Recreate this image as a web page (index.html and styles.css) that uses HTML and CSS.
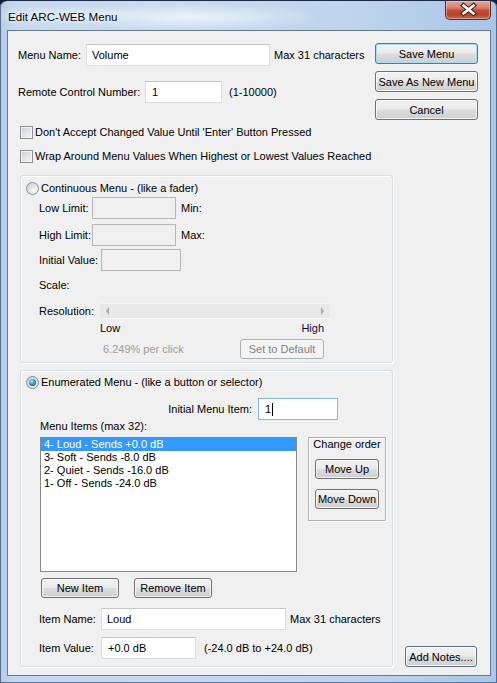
FILE: index.html
```html
<!DOCTYPE html>
<html lang="en">
<head>
<meta charset="utf-8">
<title>Edit ARC-WEB Menu</title>
<link rel="stylesheet" href="styles.css">
</head>
<body>
<div class="window">
  <div class="titlebar">
    <span class="title">Edit ARC-WEB Menu</span>
    <div class="close" aria-label="Close">
      <svg width="46" height="19" viewBox="0 0 46 19">
        <path d="M18.5 5.5 L28.5 13.5 M28.5 5.5 L18.5 13.5" stroke="#4b2019" stroke-width="4.8" stroke-linecap="square"/>
        <path d="M18.5 5.5 L28.5 13.5 M28.5 5.5 L18.5 13.5" stroke="#ffffff" stroke-width="2.6" stroke-linecap="square"/>
      </svg>
    </div>
  </div>

  <div class="client">
    <div class="top">
      <div class="fields">
        <div class="row name-row">
          <span class="lbl lbl-name">Menu Name:</span>
          <div class="tb tb-name">Volume</div>
          <span class="hint hint-name">Max 31 characters</span>
        </div>
        <div class="row rc-row">
          <span class="lbl lbl-rc">Remote Control Number:</span>
          <div class="tb tb-rc">1</div>
          <span class="hint hint-rc">(1-10000)</span>
        </div>
        <div class="check check-first"><span class="cb"></span><span>Don't Accept Changed Value Until 'Enter' Button Pressed</span></div>
        <div class="check check-second"><span class="cb"></span><span>Wrap Around Menu Values When Highest or Lowest Values Reached</span></div>
      </div>
      <div class="actions">
        <div class="btn btn-default">Save Menu</div>
        <div class="btn">Save As New Menu</div>
        <div class="btn">Cancel</div>
      </div>
    </div>

    <div class="bottom">
      <div class="groups">
        <div class="group group-cont">
          <div class="opt"><span class="rb"></span><span>Continuous Menu - (like a fader)</span></div>
          <div class="cbody">
            <div class="row lim-row lim-low">
              <span class="lbl lbl-lim">Low Limit:</span>
              <div class="tb tb-off tb-lim"></div>
              <span class="after">Min:</span>
            </div>
            <div class="row lim-row lim-high">
              <span class="lbl lbl-lim">High Limit:</span>
              <div class="tb tb-off tb-lim"></div>
              <span class="after">Max:</span>
            </div>
            <div class="row lim-row lim-init">
              <span class="lbl lbl-init">Initial Value:</span>
              <div class="tb tb-off tb-init"></div>
            </div>
            <div class="scale-row">Scale:</div>
            <div class="res-row">
              <span class="lbl lbl-res">Resolution:</span>
              <div class="scroll"><span class="arr arr-l"></span><span class="arr arr-r"></span></div>
            </div>
            <div class="ends"><span>Low</span><span>High</span></div>
            <div class="click-row">
              <span class="muted">6.249% per click</span>
              <div class="btn btn-off btn-default-set">Set to Default</div>
            </div>
          </div>
        </div>

        <div class="group group-enum">
          <div class="opt"><span class="rb rb-on"></span><span>Enumerated Menu - (like a button or selector)</span></div>
          <div class="ebody">
            <div class="init-row">
              <span class="lbl-initial">Initial Menu Item:</span>
              <div class="tb tb-focus tb-item">1<span class="caret"></span></div>
            </div>
            <div class="items-lbl">Menu Items (max 32):</div>
            <div class="list-row">
              <div class="list">
                <div class="li li-sel">4- Loud - Sends +0.0 dB</div>
                <div class="li">3- Soft - Sends -8.0 dB</div>
                <div class="li">2- Quiet - Sends -16.0 dB</div>
                <div class="li">1- Off - Sends -24.0 dB</div>
              </div>
              <div class="order">
                <div class="order-title">Change order</div>
                <div class="btn btn-order btn-up">Move Up</div>
                <div class="btn btn-order btn-down">Move Down</div>
              </div>
            </div>
            <div class="item-btns">
              <div class="btn btn-item">New Item</div>
              <div class="btn btn-item btn-remove">Remove Item</div>
            </div>
            <div class="row iname-row">
              <span class="lbl lbl-item">Item Name:</span>
              <div class="tb tb-iname">Loud</div>
              <span class="hint hint-iname">Max 31 characters</span>
            </div>
            <div class="row ival-row">
              <span class="lbl lbl-item">Item Value:</span>
              <div class="tb tb-ival">+0.0 dB</div>
              <span class="hint hint-ival">(-24.0 dB to +24.0 dB)</span>
            </div>
          </div>
        </div>
      </div>
      <div class="btn btn-notes">Add Notes....</div>
    </div>
  </div>
</div>
</body>
</html>
```

FILE: styles.css
```css
* { box-sizing: border-box; }

html, body { margin: 0; padding: 0; }

body {
  width: 497px;
  height: 683px;
  overflow: hidden;
  background: #0d1a33;
  font-family: "Liberation Sans", Arial, sans-serif;
  font-size: 11px;
  color: #000;
}

/* ---------- window frame ---------- */
.window {
  width: 497px;
  height: 683px;
  display: flex;
  flex-direction: column;
  padding-bottom: 7px;
  border-top: 1px solid #1b2b47;
  border-radius: 7px 7px 0 0;
  background:
    radial-gradient(ellipse 130px 14px at 190px 16px, rgba(240, 246, 252, 0.85), rgba(240, 246, 252, 0) 100%),
    radial-gradient(ellipse 90px 10px at 60px 14px, rgba(235, 243, 251, 0.6), rgba(235, 243, 251, 0) 100%),
    linear-gradient(to right, #b7cde6 0, #c6d9ee 3%, #c9dbef 30%, #bfd5ed 70%, #a9c6e6 100%);
  box-shadow: inset 1px 0 0 #5a6f8c, inset -1px 0 0 #4f6d99, inset 0 -1px 0 #5c78a0;
}

.titlebar {
  height: 29px;
  display: flex;
  align-items: flex-start;
  padding: 0 6px 0 8px;
}

.title {
  margin-top: 8px;
  font-size: 11.6px;
  line-height: 15px;
  color: #000;
  text-shadow: 0 0 6px rgba(255, 255, 255, 0.95), 0 0 2px rgba(255, 255, 255, 0.9);
}

.close {
  margin-left: auto;
  width: 46px;
  height: 19px;
  border: 1px solid #5e2a22;
  border-top: none;
  border-radius: 0 0 5px 5px;
  background: linear-gradient(#e6a595 0%, #d67d6a 40%, #c4503b 50%, #b8402a 75%, #cc6c52 100%);
  box-shadow: inset 0 0 0 1px rgba(255, 220, 210, 0.45);
}

.close svg { display: block; margin: -1px 0 0 -1px; }

.client {
  flex: 1;
  margin: 0 6px 0 7px;
  border: 1px solid #66788f;
  background: #f0f0f0;
}

/* ---------- top block ---------- */
.top {
  display: flex;
  padding: 12px 12px 0 10px;
}

.fields {
  flex: 1;
  display: flex;
  flex-direction: column;
}

.row {
  display: flex;
  align-items: center;
  height: 22px;
}

.name-row { margin-top: 1px; }
.rc-row { margin-top: 15px; }

.lbl { flex: none; white-space: nowrap; }
.lbl-name { width: 68px; }
.lbl-rc { width: 127px; }

.tb {
  flex: none;
  height: 22px;
  display: flex;
  align-items: center;
  padding-left: 5px;
  background: #fff;
  border: 1px solid #dadde2;
  border-top-color: #c3c7cd;
  white-space: nowrap;
}

.tb-name { width: 184px; }
.tb-rc { width: 77px; padding-left: 6px; }

.hint { white-space: nowrap; }
.hint-name { margin-left: 4px; }
.hint-rc { margin-left: 7px; }

.check {
  display: flex;
  align-items: center;
  height: 16px;
  margin-left: 2px;
  white-space: nowrap;
}

.check-first { margin-top: 21px; }
.check-second { margin-top: 8px; }

.cb {
  flex: none;
  width: 13px;
  height: 13px;
  margin-right: 2px;
  border: 1px solid #8e8f8f;
  background: linear-gradient(135deg, #c9ccd2 0%, #e4e6e9 55%, #f6f6f6 100%);
  box-shadow: inset 0 0 0 1px #f4f4f4;
}

.actions {
  flex: none;
  width: 103px;
  display: flex;
  flex-direction: column;
  gap: 7px;
}

/* ---------- buttons ---------- */
.btn {
  flex: none;
  height: 21px;
  display: flex;
  align-items: center;
  justify-content: center;
  border: 1px solid #707070;
  border-radius: 3px;
  background: linear-gradient(#f2f2f2 0%, #ebebeb 48%, #dddddd 52%, #cfcfcf 100%);
  box-shadow: inset 0 0 0 1px rgba(252, 252, 252, 0.85);
  white-space: nowrap;
}

.btn-default {
  border-color: #3c7fb1;
  box-shadow: inset 0 0 0 1px #a7dcf5;
}

.btn-off {
  border-color: #adb2b5;
  background: #f4f4f4;
  color: #838383;
  box-shadow: none;
}

/* ---------- lower block ---------- */
.bottom {
  display: flex;
  align-items: flex-end;
  margin-top: 11px;
  padding-left: 12px;
}

.groups {
  flex: none;
  width: 373px;
  display: flex;
  flex-direction: column;
  gap: 7px;
}

.group {
  border: 1px solid #d5dfe5;
  border-radius: 3px;
  box-shadow: inset 1px 1px 0 #fff, 1px 1px 0 #fff;
  padding-left: 5px;
}

.group-cont { height: 188px; padding-top: 4px; }
.group-enum { height: 297px; padding-top: 3px; }

.opt {
  display: flex;
  align-items: center;
  height: 16px;
  white-space: nowrap;
}

.rb {
  flex: none;
  width: 13px;
  height: 13px;
  margin-right: 2px;
  border-radius: 50%;
  border: 1px solid #8e8f8f;
  background: radial-gradient(circle at 65% 70%, #fbfbfb 0%, #e3e3e3 45%, #c9cbcf 100%);
  display: flex;
  align-items: center;
  justify-content: center;
}

.rb-on {
  border-color: #7d8a96;
}

.rb-on::after {
  content: "";
  width: 7px;
  height: 7px;
  border-radius: 50%;
  background: radial-gradient(circle at 40% 35%, #b9ecff 0%, #49a6e6 35%, #1a5a94 75%, #13406e 100%);
}

/* continuous group body */
.cbody { padding-left: 13px; }

.lim-low { margin-top: 1px; }
.lim-high { margin-top: 5px; }
.lim-init { margin-top: 3px; }

.lbl-lim { width: 53px; }
.lbl-init { width: 62px; }

.tb-off {
  background: transparent;
  border: 1px solid #b4b8bd;
}

.tb-lim { width: 84px; }
.tb-init { width: 80px; }

.after { margin-left: 5px; }

.scale-row {
  margin-top: 7px;
  height: 14px;
  line-height: 14px;
}

.res-row {
  display: flex;
  align-items: center;
  height: 16px;
  margin-top: 11px;
}

.lbl-res { width: 61px; }

.scroll {
  width: 230px;
  height: 16px;
  display: flex;
  align-items: center;
  justify-content: space-between;
  padding: 0 6px 0 6px;
  background: #e8e8e8;
  border-top: 1px solid #f6f6f6;
  border-bottom: 1px solid #f6f6f6;
}

.arr {
  width: 0;
  height: 0;
  border-top: 4px solid transparent;
  border-bottom: 4px solid transparent;
}

.arr-l { border-right: 3px solid #a9a9a9; }
.arr-r { border-left: 3px solid #a9a9a9; }

.ends {
  display: flex;
  justify-content: space-between;
  width: 224px;
  margin-left: 61px;
  margin-top: 3px;
  height: 13px;
  line-height: 13px;
}

.ends span:last-child { color: #0b0b3a; }

.click-row {
  display: flex;
  align-items: center;
  width: 285px;
  margin-top: 4px;
  padding-left: 64px;
}

.muted { color: #9d9d9d; white-space: nowrap; }

.btn-default-set {
  width: 84px;
  height: 20px;
  margin-left: auto;
}

/* enumerated group body */
.ebody { padding-left: 13px; }

.init-row {
  display: flex;
  align-items: center;
  justify-content: flex-end;
  width: 299px;
  margin-top: 8px;
  height: 22px;
}

.lbl-initial { margin-right: 6px; white-space: nowrap; }

.tb-focus { border: 1px solid #86b7e2; }

.tb-item { width: 80px; padding-left: 6px; }

.caret {
  display: inline-block;
  width: 1px;
  height: 13px;
  margin-left: 1px;
  background: #000;
}

.items-lbl {
  margin-left: 1px;
  height: 13px;
  line-height: 13px;
  margin-top: 0;
}

.list-row {
  display: flex;
  align-items: flex-start;
  margin-top: 4px;
  margin-left: 1px;
}

.list {
  width: 257px;
  height: 135px;
  border: 1px solid #828790;
  background: #fff;
  padding-top: 0;
}

.li {
  height: 13px;
  line-height: 13px;
  padding-left: 3px;
  white-space: nowrap;
}

.li-sel { background: #3399ff; color: #fff; }

.order {
  width: 78px;
  height: 84px;
  margin-left: 11px;
  border: 1px solid #b1b1b1;
  box-shadow: 1px 1px 0 #fff, inset 1px 1px 0 #fff;
  display: flex;
  flex-direction: column;
  align-items: center;
}

.order-title {
  height: 13px;
  line-height: 13px;
  white-space: nowrap;
}

.btn-order { width: 64px; height: 20px; }
.btn-up { margin-top: 8px; }
.btn-down { margin-top: 10px; }

.item-btns {
  display: flex;
  margin-top: 6px;
  margin-left: 2px;
}

.btn-item { width: 78px; height: 20px; }
.btn-remove { margin-left: 15px; }

.iname-row { margin-top: 10px; }
.ival-row { margin-top: 7px; }

.lbl-item { width: 62px; }
.tb-iname { width: 185px; }
.tb-ival { width: 95px; padding-left: 6px; }
.hint-iname { margin-left: 4px; }
.hint-ival { margin-left: 8px; }

.btn-notes {
  width: 72px;
  height: 21px;
  margin-left: 12px;
  margin-bottom: 0;
  border-color: #5f6e7e;
}
```
